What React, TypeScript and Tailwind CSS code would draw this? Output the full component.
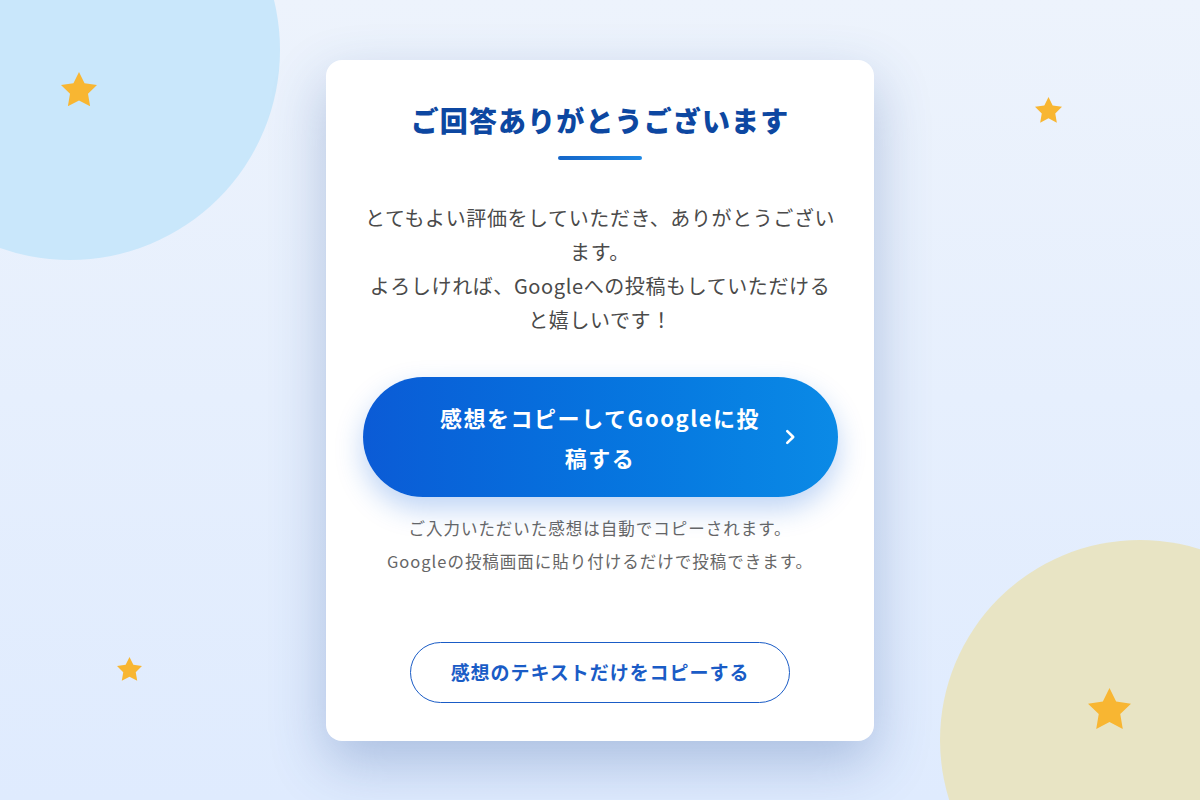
import React from "react";

function Star({ size, className }: { size: number; className?: string }) {
  return (
    <svg
      width={size}
      height={size * 0.951}
      viewBox="2 2 20 19.02"
      className={className}
      aria-hidden="true"
    >
      <polygon
        points="12,2 15.09,8.26 22,9.27 17,14.14 18.18,21.02 12,17.77 5.82,21.02 7,14.14 2,9.27 8.91,8.26"
        fill="#f8b632"
      />
    </svg>
  );
}

export default function App() {
  return (
    <div
      className="relative w-full min-h-screen overflow-hidden bg-gradient-to-b from-[#edf3fc] to-[#dfebfe] flex items-center justify-center"
      style={{ fontFamily: '"Noto Sans CJK JP", "Noto Sans", sans-serif' }}
    >
      {/* decorative circles */}
      <div className="absolute left-[-140px] top-[-160px] w-[420px] h-[420px] rounded-full bg-[#c9e7fb]" />
      <div className="absolute left-[940px] top-[540px] w-[400px] h-[400px] rounded-full bg-[#e8e4c4]" />

      {/* stars */}
      <Star size={36} className="absolute left-[61px] top-[72px]" />
      <Star size={27} className="absolute left-[1035px] top-[97px]" />
      <Star size={25} className="absolute left-[117px] top-[657px]" />
      <Star size={43} className="absolute left-[1088px] top-[688px]" />

      {/* card */}
      <div className="relative w-[548px] bg-white rounded-[16px] shadow-[0_22px_55px_rgba(45,85,155,0.3)] px-[30px] pt-[40px] pb-[38px] flex flex-col items-center">
        <h1 className="text-[28px] leading-[40px] font-black tracking-[0.04em] text-[#0d47a1]">
          ご回答ありがとうございます
        </h1>
        <div className="mt-4 w-[84px] h-1 rounded-full bg-gradient-to-r from-[#1565c8] to-[#1e88e5]" />

        <p className="mt-[41px] w-[477px] text-[20px] leading-[34px] tracking-[0.03em] text-[#4a4a4a] text-center">
          とてもよい評価をしていただき、ありがとうございます。
          <br />
          よろしければ、Googleへの投稿もしていただけると嬉しいです！
        </p>

        <button className="relative mt-10 w-[475px] h-[120px] rounded-full bg-gradient-to-r from-[#0b5bd6] to-[#0b8ae6] shadow-[0_12px_28px_rgba(20,100,220,0.28)] flex items-center justify-center px-[68px]">
          <span className="text-white text-[22px] leading-[40px] font-bold tracking-[0.07em] text-center">
            感想をコピーしてGoogleに投稿する
          </span>
          <svg
            className="absolute right-[37px] top-1/2 -translate-y-1/2"
            width="22"
            height="22"
            viewBox="0 0 24 24"
            fill="none"
            stroke="white"
            strokeWidth="2.8"
            strokeLinecap="round"
            strokeLinejoin="round"
          >
            <path d="M9 5.5l6.5 6.5-6.5 6.5" />
          </svg>
        </button>

        <p className="mt-[15px] text-[16.5px] leading-[33px] tracking-[0.06em] text-[#666666] text-center">
          ご入力いただいた感想は自動でコピーされます。
          <br />
          Googleの投稿画面に貼り付けるだけで投稿できます。
        </p>

        <button className="mt-[64px] w-[380px] h-[61px] rounded-full border-[1.5px] border-[#1a5cc6] bg-white flex items-center justify-center">
          <span className="text-[19px] font-bold tracking-[0.05em] text-[#1a5cc6]">
            感想のテキストだけをコピーする
          </span>
        </button>
      </div>
    </div>
  );
}
